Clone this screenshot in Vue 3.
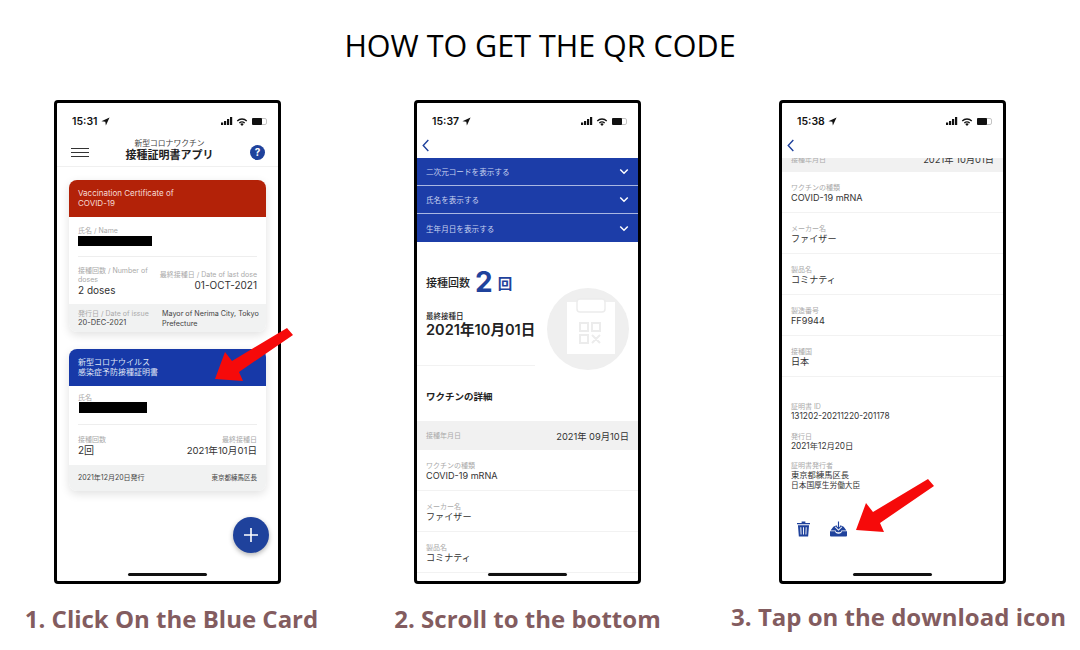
<template>
  <div class="page">
    <h1 class="title">HOW TO GET THE QR CODE</h1>
    <div class="steps">
      <!-- step 1: certificate list -->
      <section class="step step-one">
        <div class="phone">
          <div class="screen">
            <div class="status">
              <span class="time">15:31 <svg class="loc" viewBox="0 0 10 10"><path d="M9.500.5 .5 4.700l4.300.5.6 4.300z" /></svg></span>
              <span class="status-icons">
                <svg class="signal" viewBox="0 0 12 8"><rect x="0" y="5.500" width="2.200" height="2.500" /><rect x="3" y="4" width="2.200" height="4" /><rect x="6" y="2" width="2.200" height="6" /><rect x="9" y="0" width="2.200" height="8" /></svg>
                <svg class="wifi" viewBox="0 0 12 9"><path d="M6 9 4.200 7a2.600 2.600 0 0 1 3.600 0zM2.900 5.600a4.500 4.500 0 0 1 6.200 0L8.300 6.500a3.400 3.400 0 0 0-4.600 0zM.8 3.500a7.400 7.400 0 0 1 10.400 0l-.9.9a6.200 6.200 0 0 0-8.600 0z" /></svg>
                <span class="battery"><i></i></span>
              </span>
            </div>
            <header class="app-head">
              <span class="burger"><i></i><i></i><i></i></span>
              <div class="app-title">
                <small>新型コロナワクチン</small>
                <strong>接種証明書アプリ</strong>
              </div>
              <span class="help">?</span>
            </header>
            <div class="cards">
              <article class="card">
                <div class="card-top red">Vaccination Certificate of<br />COVID-19</div>
                <div class="card-body">
                  <div class="lbl">氏名 / Name</div>
                  <div class="redact r1"></div>
                  <div class="card-row en">
                    <div class="doses">
                      <div class="lbl">接種回数 / Number of doses</div>
                      <div class="val-left">2 doses</div>
                    </div>
                    <div class="right">
                      <div class="lbl">最終接種日 / Date of last dose</div>
                      <div class="val">01-OCT-2021</div>
                    </div>
                  </div>
                </div>
                <div class="card-foot en-foot">
                  <div class="issue-col">
                    <div class="lbl">発行日 / Date of issue</div>
                    <div class="foot-text">20-DEC-2021</div>
                  </div>
                  <div class="foot-text mayor">Mayor of Nerima City, Tokyo Prefecture</div>
                </div>
              </article>
              <article class="card second">
                <div class="card-top blue">新型コロナウイルス<br />感染症予防接種証明書</div>
                <div class="card-body jp">
                  <div class="lbl">氏名</div>
                  <div class="redact r2"></div>
                  <div class="card-row">
                    <div>
                      <div class="lbl">接種回数</div>
                      <div class="val-left">2回</div>
                    </div>
                    <div class="right">
                      <div class="lbl">最終接種日</div>
                      <div class="val">2021年10月01日</div>
                    </div>
                  </div>
                </div>
                <div class="card-foot jp-foot">
                  <span class="foot-text">2021年12月20日発行</span>
                  <span class="foot-text ward">東京都練馬区長</span>
                </div>
              </article>
            </div>
            <button class="fab" type="button">
              <svg viewBox="0 0 16 16"><path d="M8 1v14M1 8h14" /></svg>
            </button>
          </div>
          <div class="home-bar"></div>
          <svg class="arrow arrow-one" viewBox="0 0 80 54"><path d="M72 1 78 8 24 45 28 54 0 52 10 25 17 34z" /></svg>
        </div>
        <p class="caption">1. Click On the Blue Card</p>
      </section>

      <!-- step 2: certificate detail -->
      <section class="step step-two">
        <div class="phone">
          <div class="screen">
            <div class="status">
              <span class="time">15:37 <svg class="loc" viewBox="0 0 10 10"><path d="M9.500.5 .5 4.700l4.300.5.6 4.300z" /></svg></span>
              <span class="status-icons">
                <svg class="signal" viewBox="0 0 12 8"><rect x="0" y="5.500" width="2.200" height="2.500" /><rect x="3" y="4" width="2.200" height="4" /><rect x="6" y="2" width="2.200" height="6" /><rect x="9" y="0" width="2.200" height="8" /></svg>
                <svg class="wifi" viewBox="0 0 12 9"><path d="M6 9 4.200 7a2.600 2.600 0 0 1 3.600 0zM2.900 5.600a4.500 4.500 0 0 1 6.200 0L8.300 6.500a3.400 3.400 0 0 0-4.600 0zM.8 3.500a7.400 7.400 0 0 1 10.400 0l-.9.9a6.200 6.200 0 0 0-8.600 0z" /></svg>
                <span class="battery"><i></i></span>
              </span>
            </div>
            <div class="back-row">
              <svg viewBox="0 0 8 14"><path d="M6.500 1 1 7l5.500 6" /></svg>
            </div>
            <div v-for="row in toggles" :key="row" class="toggle">
              <span>{{ row }}</span>
              <svg viewBox="0 0 12 8"><path d="M1.500 1.500 6 6l4.500-4.500" /></svg>
            </div>
            <div class="summary">
              <div class="count"><span>接種回数</span><b>2</b><em>回</em></div>
              <div class="last-label">最終接種日</div>
              <div class="last-date">2021年10月01日</div>
              <div class="seal">
                <svg viewBox="0 0 82 82">
                  <path d="M20 14h48v52H20z" fill="#fff" />
                  <rect x="30" y="11" width="28" height="13" rx="3" fill="#fff" stroke="#ececec" stroke-width="1.500" />
                  <path d="M33 35h8v8h-8zM45 35h8v8h-8zM33 47h8v8h-8zM45 47l8 8M53 47l-8 8" fill="none" stroke="#ececec" stroke-width="2" />
                </svg>
              </div>
            </div>
            <div class="short-rule"></div>
            <div class="detail-title">ワクチンの詳細</div>
            <div class="date-band">
              <span class="lbl">接種年月日</span>
              <span class="band-val">2021年 09月10日</span>
            </div>
            <div v-for="item in details.slice(0, 3)" :key="item.label" class="detail">
              <div class="lbl">{{ item.label }}</div>
              <div class="detail-val">{{ item.value }}</div>
            </div>
          </div>
          <div class="home-bar"></div>
        </div>
        <p class="caption">2. Scroll to the bottom</p>
      </section>

      <!-- step 3: bottom of the detail page -->
      <section class="step step-three">
        <div class="phone">
          <div class="screen">
            <div class="status">
              <span class="time">15:38 <svg class="loc" viewBox="0 0 10 10"><path d="M9.500.5 .5 4.700l4.300.5.6 4.300z" /></svg></span>
              <span class="status-icons">
                <svg class="signal" viewBox="0 0 12 8"><rect x="0" y="5.500" width="2.200" height="2.500" /><rect x="3" y="4" width="2.200" height="4" /><rect x="6" y="2" width="2.200" height="6" /><rect x="9" y="0" width="2.200" height="8" /></svg>
                <svg class="wifi" viewBox="0 0 12 9"><path d="M6 9 4.200 7a2.600 2.600 0 0 1 3.600 0zM2.900 5.600a4.500 4.500 0 0 1 6.200 0L8.300 6.500a3.400 3.400 0 0 0-4.600 0zM.8 3.500a7.400 7.400 0 0 1 10.400 0l-.9.9a6.200 6.200 0 0 0-8.600 0z" /></svg>
                <span class="battery"><i></i></span>
              </span>
            </div>
            <div class="back-row">
              <svg viewBox="0 0 8 14"><path d="M6.500 1 1 7l5.500 6" /></svg>
            </div>
            <div class="clip-band">
              <div class="clip-inner">
                <span class="lbl">接種年月日</span>
                <span class="band-val">2021年 10月01日</span>
              </div>
            </div>
            <div v-for="item in details" :key="item.label" class="detail">
              <div class="lbl">{{ item.label }}</div>
              <div class="detail-val">{{ item.value }}</div>
            </div>
            <div class="issue">
              <div class="lbl">証明書 ID</div>
              <div class="issue-val">131202-20211220-201178</div>
              <div class="lbl gap">発行日</div>
              <div class="issue-val">2021年12月20日</div>
              <div class="lbl gap">証明書発行者</div>
              <div class="issue-val">東京都練馬区長</div>
              <div class="issue-val ministry">日本国厚生労働大臣</div>
            </div>
            <div class="actions">
              <svg class="trash" viewBox="0 0 14 16"><path d="M5 1.500V0h4v1.500h5V3H0V1.500zM1 4h12l-1 12H2zm2.600 2 .3 8h1L4.600 6zm2.900 0v8h1V6zm2.900 0-.3 8h1l.3-8z" fill-rule="evenodd" /></svg>
              <svg class="download" viewBox="0 0 18 16">
                <path d="M0 10.500h5.500a3.500 2.500 0 0 0 7 0H18V15a1 1 0 0 1-1 1H1a1 1 0 0 1-1-1z" />
                <path d="M.6 9.500 3.500 5.500 7 4h4l3.500 1.500 2.900 4h-5.400a3 2 0 0 1-6 0z" />
                <path d="M9 0v7.500M6.300 5 9 7.700 11.700 5" fill="none" stroke="#fff" stroke-width="3" />
                <path d="M9 0v7.500M6.300 5 9 7.700 11.700 5" fill="none" stroke="#1f429c" stroke-width="1.200" />
              </svg>
            </div>
          </div>
          <div class="home-bar"></div>
          <svg class="arrow arrow-three" viewBox="0 0 80 54"><path d="M72 1 78 8 24 45 28 54 0 52 10 25 17 34z" /></svg>
        </div>
        <p class="caption">3. Tap on the download icon</p>
      </section>
    </div>
  </div>
</template>

<script setup>
const toggles = ['二次元コードを表示する', '氏名を表示する', '生年月日を表示する']

const details = [
  { label: 'ワクチンの種類', value: 'COVID-19 mRNA' },
  { label: 'メーカー名', value: 'ファイザー' },
  { label: '製品名', value: 'コミナティ' },
  { label: '製造番号', value: 'FF9944' },
  { label: '接種国', value: '日本' }
]
</script>

<style>
html, body {
  margin: 0;
  background: #fff;
}
</style>

<style scoped>
.page {
  width: 1080px;
  height: 650px;
  overflow: hidden;
  font-family: Inter, "Noto Sans CJK JP", sans-serif;
  color: #222;
}

.title {
  margin: 0;
  padding-top: 26px;
  height: 100px;
  box-sizing: border-box;
  text-align: center;
  font: 400 30.5px/38px "Open Sans", sans-serif;
  color: #000;
}

.steps {
  display: flex;
  padding-left: 54px;
}

.step {
  display: flex;
  flex-direction: column;
  align-items: center;
  width: 227px;
}

.step-one {
  margin-right: 133px;
}

.step-two {
  margin-right: 138px;
}

.phone {
  position: relative;
  width: 227px;
  height: 484px;
  flex: none;
  box-sizing: border-box;
  border: 3px solid #000;
  border-radius: 4px;
}

.screen {
  position: relative;
  height: 100%;
  overflow: hidden;
}

.caption {
  margin: 19px 0 0;
  white-space: nowrap;
  font: 700 24px/32px "Open Sans", sans-serif;
  color: #835c5f;
}

.step-one .caption {
  transform: translateX(4px);
}

.step-three .caption {
  margin-top: 17px;
  transform: translateX(6px);
}

/* status bar */
.status {
  display: flex;
  justify-content: space-between;
  align-items: center;
  height: 36px;
  padding: 0 11px 0 15px;
}

.time {
  display: flex;
  align-items: center;
  gap: 3px;
  font-size: 10.5px;
  font-weight: 600;
  color: #111;
}

.loc {
  width: 9px;
  height: 9px;
  fill: #111;
}

.status-icons {
  display: flex;
  align-items: center;
  gap: 3px;
}

.signal {
  width: 12px;
  height: 8px;
  fill: #111;
}

.wifi {
  width: 12px;
  height: 9px;
  fill: #111;
}

.battery {
  display: block;
  width: 15px;
  height: 7px;
  margin-left: 1px;
  box-sizing: border-box;
  border: 1px solid #c4c4c4;
  border-radius: 2px;
}

.battery i {
  display: block;
  width: 10px;
  height: 7px;
  margin: -1px 0 0 -1px;
  background: #111;
  border-radius: 1px;
}

/* step 1 */
.app-head {
  display: flex;
  align-items: center;
  height: 27px;
  padding: 0 13px 0 14px;
  border-bottom: 1px solid #f0f0f0;
}

.burger {
  display: flex;
  flex-direction: column;
  gap: 3px;
  width: 18px;
}

.burger i {
  display: block;
  height: 1px;
  background: #333;
}

.app-title {
  flex: 1;
  display: flex;
  flex-direction: column;
  align-items: center;
  margin-top: -6px;
}

.app-title small {
  font-size: 7.8px;
  line-height: 10px;
  color: #444;
}

.app-title strong {
  font-size: 11px;
  line-height: 14px;
  font-weight: 700;
}

.help {
  width: 15px;
  height: 15px;
  border-radius: 50%;
  background: #1f429c;
  color: #fff;
  font-size: 10px;
  font-weight: 700;
  line-height: 15px;
  text-align: center;
}

.cards {
  padding: 13px 12px 0;
}

.card {
  border-radius: 8px;
  overflow: hidden;
  background: #fff;
  box-shadow: 0 3px 10px rgba(0, 0, 0, 0.12);
}

.second {
  margin-top: 17px;
}

.card-top {
  height: 37px;
  padding: 8px 9px 0;
  box-sizing: border-box;
  font-size: 8px;
  line-height: 10px;
  color: #f6dcd6;
}

.red {
  background: #b32208;
}

.blue {
  background: #1739a8;
  color: #dfe5f5;
}

.card-body {
  height: 87px;
  padding: 9px 9px 0;
  box-sizing: border-box;
}

.card-body.jp {
  height: 79px;
  padding-top: 7px;
}

.lbl {
  font-size: 7px;
  line-height: 9px;
  color: #aaa;
}

.redact {
  background: #000;
  height: 10px;
}

.r1 {
  width: 74px;
  margin-top: 1px;
}

.r2 {
  width: 68px;
  height: 11px;
  margin-left: 1px;
}

.card-row {
  display: flex;
  justify-content: space-between;
  align-items: flex-end;
  margin-top: 11px;
  padding-top: 10px;
  border-top: 1px solid #eee;
}

.en {
  margin-top: 10px;
  padding-top: 9px;
}

.en .right {
  padding-bottom: 5px;
}

.en .right .lbl {
  white-space: nowrap;
}

.doses {
  width: 76px;
}

.right {
  text-align: right;
}

.val-left,
.val {
  font-size: 10px;
  line-height: 13px;
  color: #333;
}

.jp .val {
  font-size: 9.6px;
}

.card-foot {
  display: flex;
  background: #f1f2f2;
  padding: 0 9px;
  box-sizing: border-box;
}

.en-foot {
  height: 28px;
  padding: 5px 0 0 9px;
}

.issue-col {
  width: 84px;
  flex: none;
  white-space: nowrap;
}

.jp-foot {
  height: 26px;
  align-items: center;
  justify-content: space-between;
}

.foot-text {
  font-size: 7.5px;
  line-height: 10px;
  color: #444;
}

.jp-foot .foot-text {
  font-size: 7px;
}

.jp-foot .ward {
  font-size: 6.5px;
}

.mayor {
  width: 100px;
  font-size: 7.2px;
}

.fab {
  position: absolute;
  left: 176px;
  top: 414px;
  width: 36px;
  height: 36px;
  padding: 0;
  border: 0;
  border-radius: 50%;
  background: #1f429c;
  box-shadow: 0 2px 5px rgba(0, 0, 0, 0.3);
  display: flex;
  align-items: center;
  justify-content: center;
}

.fab svg {
  width: 16px;
  height: 16px;
  fill: none;
  stroke: #fff;
  stroke-width: 1.6;
}

.home-bar {
  position: absolute;
  left: 71px;
  bottom: 5px;
  width: 79px;
  height: 3px;
  border-radius: 2px;
  background: #111;
}

.arrow {
  position: absolute;
  width: 80px;
  height: 54px;
  fill: #f60a0a;
}

.arrow-one {
  left: 158px;
  top: 224px;
}

.arrow-three {
  left: 74px;
  top: 375px;
}

/* step 2 */
.back-row {
  height: 19px;
  padding: 0 0 6px 5px;
  box-sizing: border-box;
  display: flex;
  align-items: center;
}

.back-row svg {
  width: 8px;
  height: 13px;
  fill: none;
  stroke: #1f429c;
  stroke-width: 1.5;
}

.toggle {
  display: flex;
  justify-content: space-between;
  align-items: center;
  height: 28px;
  padding: 0 9px;
  box-sizing: border-box;
  background: #1c3da8;
  border-bottom: 1px solid #a9b7e2;
  font-size: 7.6px;
  color: #c8d2ef;
}

.toggle:nth-of-type(5) {
  border-bottom: 0;
}

.toggle svg {
  width: 10px;
  height: 7px;
  fill: none;
  stroke: #fff;
  stroke-width: 1.8;
}

.summary {
  position: relative;
  height: 123px;
  padding: 27px 9px 0;
  box-sizing: border-box;
}

.count {
  display: flex;
  align-items: center;
  height: 26px;
  font-size: 11px;
  font-weight: 500;
}

.count b {
  margin: 0 5px 0 5px;
  font-size: 28px;
  font-weight: 700;
  color: #1f429c;
}

.count em {
  font-style: normal;
  font-size: 14.5px;
  font-weight: 600;
  color: #1f429c;
}

.last-label {
  margin-top: 17px;
  font-size: 7.5px;
  line-height: 9px;
  font-weight: 500;
}

.last-date {
  font-size: 14.6px;
  line-height: 18px;
  font-weight: 600;
  white-space: nowrap;
}

.seal {
  position: absolute;
  right: 9px;
  top: 46px;
  width: 82px;
  height: 82px;
  border-radius: 50%;
  background: #efefef;
  overflow: hidden;
}

.seal svg {
  display: block;
  width: 82px;
  height: 82px;
}

.short-rule {
  width: 118px;
  height: 1px;
  background: #f2f2f2;
}

.detail-title {
  height: 55px;
  padding: 25px 9px 0;
  box-sizing: border-box;
  font-size: 9.5px;
  line-height: 12px;
  font-weight: 600;
}

.date-band {
  display: flex;
  justify-content: space-between;
  align-items: center;
  height: 29px;
  padding: 0 9px;
  background: #f1f1f1;
}

.band-val {
  font-size: 9.3px;
  color: #333;
}

.detail {
  height: 41px;
  padding: 11px 9px 0;
  box-sizing: border-box;
  border-bottom: 1px solid #f2f2f2;
}

.detail-val {
  font-size: 9.1px;
  line-height: 12px;
  color: #333;
}

/* step 3 */
.clip-band {
  height: 14px;
  overflow: hidden;
  background: #f1f1f1;
}

.clip-inner {
  display: flex;
  justify-content: space-between;
  align-items: center;
  height: 14px;
  padding: 0 9px;
  margin-top: -6px;
}

.issue {
  padding: 25px 9px 0;
}

.issue .gap {
  margin-top: 10px;
}

.issue-val {
  font-size: 8.3px;
  line-height: 10.5px;
  color: #333;
}

.ministry {
  font-size: 7.7px;
}

.actions {
  display: flex;
  align-items: center;
  gap: 20px;
  padding: 30px 0 0 15px;
}

.trash {
  width: 13px;
  height: 16px;
  fill: #1f429c;
}

.download {
  width: 17px;
  height: 16px;
  fill: #1f429c;
}
</style>
